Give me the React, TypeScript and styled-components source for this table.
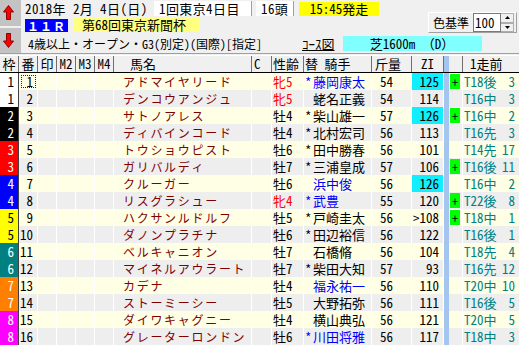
import styled, { createGlobalStyle } from "styled-components";

const GlobalStyle = createGlobalStyle`
  body {
    margin: 0;
    background: #f0f0f0;
    font-family: "Noto Sans Mono CJK JP", "Noto Sans CJK JP", monospace;
    overflow: hidden;
  }
`;

const COLS = "19px 19px 19px 19px 19px 19px 138px 20px 32px 68px 40px 32px 5px 14px 97px";

const FRAME_COLORS: Record<number, [string, string]> = {
  1: ["#ffffff", "#000000"],
  2: ["#000000", "#ffffff"],
  3: ["#ff0000", "#ffffff"],
  4: ["#0000ff", "#ffffff"],
  5: ["#ffff00", "#000000"],
  6: ["#008080", "#ffffff"],
  7: ["#ff8000", "#ffffff"],
  8: ["#ff00ff", "#ffffff"],
};

type Horse = {
  frame: number;
  no: number;
  name: string;
  sexAge: string;
  mare: boolean;
  mark: boolean;
  jockey: string;
  blue: boolean;
  weight: string;
  zi: string;
  hot: boolean;
  plus: boolean;
  prev: string;
  rank: string;
};

const h = (
  frame: number, no: number, name: string, sexAge: string, mark: boolean, jockey: string,
  blue: boolean, weight: string, zi: string, hot: boolean, plus: boolean, prev: string, rank: string,
): Horse => ({ frame, no, name, sexAge, mare: sexAge.startsWith("牝"), mark, jockey, blue, weight, zi, hot, plus, prev, rank });

const horses: Horse[] = [
  h(1, 1, "アドマイヤリード", "牝5", true, "藤岡康太", true, "54", "125", true, true, "T18後", "3"),
  h(1, 2, "デンコウアンジュ", "牝5", false, "蛯名正義", false, "54", "114", false, false, "T16中", "3"),
  h(2, 3, "サトノアレス", "牡4", true, "柴山雄一", false, "57", "126", true, true, "T16中", "2"),
  h(2, 4, "ディバインコード", "牡4", true, "北村宏司", false, "56", "113", false, false, "T16先", "3"),
  h(3, 5, "トウショウピスト", "牡6", true, "田中勝春", false, "56", "101", false, false, "T14先", "17"),
  h(3, 6, "ガリバルディ", "牡7", true, "三浦皇成", false, "57", "106", false, true, "T16後", "11"),
  h(4, 7, "クルーガー", "牡6", false, "浜中俊", true, "56", "126", true, false, "T16中", "2"),
  h(4, 8, "リスグラシュー", "牝4", true, "武豊", true, "55", "120", false, true, "T22後", "8"),
  h(5, 9, "ハクサンルドルフ", "牡5", true, "戸崎圭太", false, "56", ">108", false, true, "T18中", "1"),
  h(5, 10, "ダノンプラチナ", "牡6", true, "田辺裕信", false, "56", "122", false, false, "T16後", "1"),
  h(6, 11, "ベルキャニオン", "牡7", false, "石橋脩", false, "56", "104", false, false, "T18先", "4"),
  h(6, 12, "マイネルアウラート", "牡7", true, "柴田大知", false, "57", "93", false, false, "T16先", "12"),
  h(7, 13, "カデナ", "牡4", false, "福永祐一", true, "56", "110", false, false, "T20中", "10"),
  h(7, 14, "ストーミーシー", "牡5", false, "大野拓弥", false, "56", "111", false, false, "T16後", "5"),
  h(8, 15, "ダイワキャグニー", "牡4", false, "横山典弘", false, "56", "121", false, false, "T20中", "5"),
  h(8, 16, "グレーターロンドン", "牡6", true, "川田将雅", true, "56", "117", false, false, "T18中", "3"),
];

function Arrow({ down }: { down?: boolean }) {
  return (
    <svg width="11" height="15" viewBox="0 0 11 15">
      <path
        d="M5.5 0.5 L10.5 7 L7.5 7 L7.5 14.5 L3.5 14.5 L3.5 7 L0.5 7 Z"
        fill="#ff0000"
        stroke="#900000"
        strokeWidth="1"
        transform={down ? "rotate(180 5.5 7.5)" : undefined}
      />
    </svg>
  );
}

function SpinTri({ down }: { down?: boolean }) {
  return (
    <svg width="5" height="3" viewBox="0 0 5 3">
      <path d={down ? "M0 0 L5 0 L2.5 3 Z" : "M2.5 0 L5 3 L0 3 Z"} fill="#000" />
    </svg>
  );
}

export default function App() {
  return (
    <Screen>
      <GlobalStyle />
      <TopBar>
        <ArrowCol>
          <ArrowButton><Arrow /></ArrowButton>
          <ArrowButton><Arrow down /></ArrowButton>
        </ArrowCol>
        <Info>
          <Line>
            <DateText>2018年 2月 4日(日)</DateText>
            <Field $w={98}>1回東京4日目</Field>
            <Field $w={38} $ml={4}>16頭</Field>
            <Badge $bg="#ffff00" $w={80} $ml={5}>15:45発走</Badge>
          </Line>
          <ColorPanel>
            <span>色基準</span>
            <NumInput>100</NumInput>
            <Spinner>
              <SpinButton><SpinTri /></SpinButton>
              <SpinButton><SpinTri down /></SpinButton>
            </Spinner>
          </ColorPanel>
          <Line>
            <RaceNo>１１Ｒ</RaceNo>
            <Badge $bg="#ffff80" $w={127} $ml={5} $left>第68回東京新聞杯</Badge>
          </Line>
          <CondLine>
            <Conditions>4歳以上・オープン・G3(別定)(国際)[指定]</Conditions>
            <CourseLink>ｺｰｽ図</CourseLink>
            <Badge $bg="#80ffff" $w={139} $ml={8} $h={15}>芝1600m （D）</Badge>
          </CondLine>
        </Info>
      </TopBar>
      <Divider />
      <Table>
        <HeadRow>
          <HeadCell $align="center">枠</HeadCell>
          <HeadCell $align="center">番</HeadCell>
          <HeadCell $align="center">印</HeadCell>
          <HeadCell $align="center">M2</HeadCell>
          <HeadCell $align="center">M3</HeadCell>
          <HeadCell $align="center">M4</HeadCell>
          <HeadCell $pl={16}>馬名</HeadCell>
          <HeadCell $pl={2}>C</HeadCell>
          <HeadCell $pl={1}>性齢</HeadCell>
          <HeadCell $pl={1}>替&nbsp;騎手</HeadCell>
          <HeadCell $pl={3}>斤量</HeadCell>
          <HeadCell $align="center">ZI</HeadCell>
          <SepCell />
          <HeadCell />
          <HeadCell $pl={7}>1走前</HeadCell>
        </HeadRow>
        {horses.map((r, i) => (
          <Row key={r.no} $even={i % 2 === 1}>
            <FrameCell $bg={FRAME_COLORS[r.frame][0]} $fg={FRAME_COLORS[r.frame][1]}>{r.frame}</FrameCell>
            <NoCell $focus={i === 0}>{r.no}</NoCell>
            <Cell />
            <Cell />
            <Cell />
            <Cell />
            <NameCell>{r.name}</NameCell>
            <Cell />
            <SexCell $mare={r.mare}>{r.sexAge}</SexCell>
            <JockeyCell $blue={r.blue}>
              <Mark>{r.mark ? "*" : ""}</Mark>
              {r.jockey}
            </JockeyCell>
            <WeightCell>{r.weight}</WeightCell>
            <ZiCell $hot={r.hot}>{r.zi}</ZiCell>
            <SepCell />
            <PlusCell>{r.plus && <Plus>+</Plus>}</PlusCell>
            <PrevCell>
              <PrevText>{r.prev}</PrevText>
              <Rank>{r.rank}</Rank>
            </PrevCell>
          </Row>
        ))}
      </Table>
    </Screen>
  );
}

const Screen = styled.div`
  width: 519px;
  height: 345px;
  overflow: hidden;
  background: #f0f0f0;
  color: #000;
`;

const TopBar = styled.div`
  display: flex;
  height: 53px;
`;

const ArrowCol = styled.div`
  width: 21px;
  display: flex;
  flex-direction: column;
  gap: 2px;
`;

const ArrowButton = styled.div`
  flex: 1;
  background: #c3c3c3;
  display: flex;
  align-items: center;
  padding-left: 3px;
`;

const Info = styled.div`
  flex: 1;
  padding-left: 4px;
  display: grid;
  grid-template-columns: 1fr 91px;
  grid-template-rows: 17px 16px 20px;
  font-size: 13px;
`;

const Line = styled.div`
  display: flex;
  align-items: center;
  white-space: nowrap;
`;

const CondLine = styled(Line)`
  grid-column: 1 / 3;
`;

const DateText = styled.span`
  width: 129px;
  letter-spacing: 0.4px;
`;

const Field = styled.span<{ $w: number; $ml?: number }>`
  box-sizing: border-box;
  width: ${(p) => p.$w}px;
  margin-left: ${(p) => p.$ml ?? 0}px;
  height: 15px;
  line-height: 15px;
  padding-left: 5px;
  background: #fff;
  border-right: 1px solid #a0a0a0;
  letter-spacing: 0.4px;
`;

const Badge = styled.span<{ $bg: string; $w: number; $ml?: number; $h?: number; $left?: boolean }>`
  box-sizing: border-box;
  width: ${(p) => p.$w}px;
  height: ${(p) => p.$h ?? 14}px;
  line-height: ${(p) => p.$h ?? 14}px;
  margin-left: ${(p) => p.$ml ?? 0}px;
  background: ${(p) => p.$bg};
  text-align: ${(p) => (p.$left ? "left" : "center")};
  padding-left: ${(p) => (p.$left ? 9 : 0)}px;
`;

const RaceNo = styled.span`
  width: 43px;
  height: 13px;
  line-height: 13px;
  background: #0000ff;
  color: #fff;
  font-weight: bold;
  font-size: 12px;
  text-align: center;
  letter-spacing: 1px;
`;

const Conditions = styled.span`
  width: 277px;
  padding-left: 3px;
  box-sizing: border-box;
  font-size: 12px;
`;

const CourseLink = styled.span`
  text-decoration: underline;
  font-size: 13px;
`;

const ColorPanel = styled.div`
  grid-row: 1 / 3;
  grid-column: 2;
  margin-top: 12px;
  margin-right: 2px;
  box-sizing: border-box;
  display: flex;
  align-items: center;
  padding-left: 4px;
  font-size: 12px;
  border-top: 1px solid #fff;
  border-left: 1px solid #fff;
  border-right: 1px solid #a0a0a0;
  border-bottom: 1px solid #a0a0a0;
`;

const NumInput = styled.span`
  box-sizing: border-box;
  margin-left: 4px;
  width: 28px;
  height: 19px;
  line-height: 17px;
  background: #fff;
  border: 1px solid #7a7a7a;
  padding-left: 1px;
  font-size: 13px;
`;

const Spinner = styled.div`
  display: flex;
  flex-direction: column;
  height: 19px;
  width: 13px;
`;

const SpinButton = styled.div`
  flex: 1;
  display: flex;
  align-items: center;
  justify-content: center;
  background: #f0f0f0;
  border: 1px solid #adadad;
  border-left: none;
`;

const Divider = styled.div`
  height: 1px;
  border-top: 1px solid #a0a0a0;
  border-bottom: 1px solid #fff;
`;

const Table = styled.div`
  width: 560px;
  font-size: 13px;
`;

const HeadRow = styled.div`
  display: grid;
  grid-template-columns: ${COLS};
  height: 16px;
  border-bottom: 1px solid #000;
  background: #f0f0f0;
`;

const HeadCell = styled.div<{ $align?: string; $pl?: number }>`
  box-sizing: border-box;
  border-right: 1px solid #707070;
  line-height: 16px;
  text-align: ${(p) => p.$align ?? "left"};
  padding-left: ${(p) => p.$pl ?? 0}px;
  white-space: nowrap;
`;

const Row = styled.div<{ $even: boolean }>`
  display: grid;
  grid-template-columns: ${COLS};
  height: 17px;
  background: ${(p) => (p.$even ? "#eeeeee" : "#ffffe6")};
`;

const Cell = styled.div`
  box-sizing: border-box;
  border-right: 1px solid #ffffff;
  line-height: 17px;
  white-space: nowrap;
  overflow: hidden;
`;

const FrameCell = styled(Cell)<{ $bg: string; $fg: string }>`
  background: ${(p) => p.$bg};
  color: ${(p) => p.$fg};
  border-right: 1px solid #404040;
  text-align: right;
  padding-right: 4px;
`;

const NoCell = styled(Cell)<{ $focus: boolean }>`
  text-align: right;
  padding-right: 4px;
  outline: ${(p) => (p.$focus ? "1px dotted #800000" : "none")};
  outline-offset: -3px;
`;

const NameCell = styled(Cell)`
  color: #800000;
  padding-left: 9px;
  font-size: 12px;
  letter-spacing: 1.7px;
`;

const SexCell = styled(Cell)<{ $mare: boolean }>`
  color: ${(p) => (p.$mare ? "#ff0000" : "#000")};
  padding-left: 1px;
`;

const JockeyCell = styled(Cell)<{ $blue: boolean }>`
  color: ${(p) => (p.$blue ? "#0000ff" : "#000")};
  padding-left: 1px;
  display: flex;
`;

const Mark = styled.span`
  width: 8px;
  flex: none;
`;

const WeightCell = styled(Cell)`
  padding-left: 8px;
`;

const ZiCell = styled(Cell)<{ $hot: boolean }>`
  background: ${(p) => (p.$hot ? "#10eeff" : "transparent")};
  text-align: right;
  padding-right: 4px;
`;

const SepCell = styled.div`
  background: #a4c6ee;
`;

const PlusCell = styled(Cell)`
  display: flex;
  align-items: center;
  padding-left: 1px;
`;

const Plus = styled.span`
  width: 10px;
  height: 15px;
  line-height: 15px;
  background: #00ff00;
  text-align: center;
  font-size: 12px;
`;

const PrevCell = styled(Cell)`
  color: #008080;
  display: flex;
  padding-left: 1px;
`;

const PrevText = styled.span`
  width: 35px;
  flex: none;
`;

const Rank = styled.span`
  width: 16px;
  text-align: right;
  flex: none;
`;
